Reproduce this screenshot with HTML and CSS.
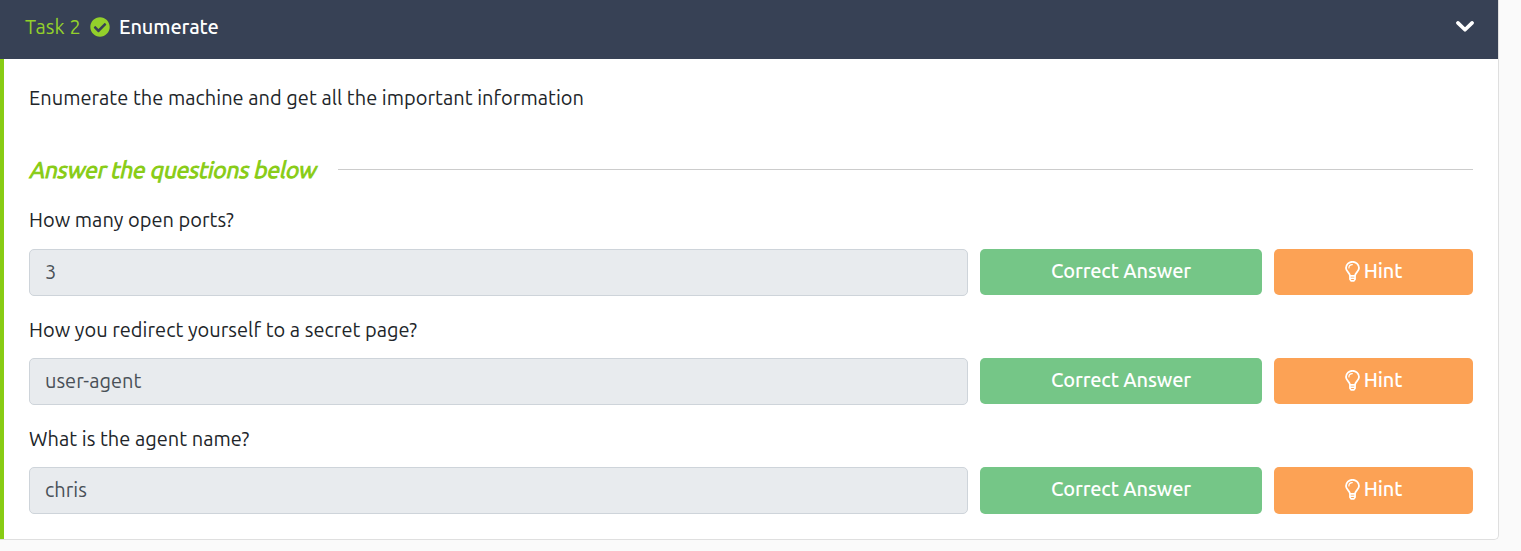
FILE: index.html
```
<!DOCTYPE html>
<html lang="en">
<head>
<meta charset="utf-8">
<title>Task 2 - Enumerate</title>
<link rel="stylesheet" href="styles.css">
</head>
<body>
<svg class="sprite" width="0" height="0">
  <symbol id="bulb" viewBox="0 0 15 21">
    <g fill="none" stroke="#fff" stroke-linecap="round" stroke-linejoin="round">
      <path stroke-width="1.8" d="M4.9 14.4C4.7 11.8 1 10.6 1 6.9a6.5 6.1 0 0 1 13 0c0 3.7-3.7 4.9-3.9 7.5"/>
      <path stroke-width="1.2" d="M3.9 6.9c0-1.9 1.5-3.2 3.4-3.3"/>
      <path stroke-width="1.6" d="M4.9 14.9h5.2M4.9 17.2h5.2M4.9 14.9v3.4l1.3 1.6h2.6l1.3-1.6v-3.4"/>
    </g>
  </symbol>
</svg>
<section class="card">
  <header class="card-header">
    <span class="task-number">Task 2</span>
    <svg class="check" viewBox="0 0 512 512"><path fill="#93d02b" d="M504 256c0 136.967-111.033 248-248 248S8 392.967 8 256 119.033 8 256 8s248 111.033 248 248zM227.314 387.314l184-184c6.248-6.248 6.248-16.379 0-22.627l-22.627-22.627c-6.248-6.249-16.379-6.249-22.628 0L216 308.118l-70.059-70.059c-6.248-6.248-16.379-6.248-22.628 0l-22.627 22.627c-6.248 6.248-6.248 16.379 0 22.627l104 104c6.249 6.249 16.379 6.249 22.628.001z"/></svg>
    <span class="task-title">Enumerate</span>
    <svg class="chevron" viewBox="0 0 18 11"><path fill="none" stroke="#fff" stroke-width="3.6" stroke-linecap="round" stroke-linejoin="round" d="M1.9 1.9L9 8.8l7.1-6.9"/></svg>
  </header>
  <div class="card-body">
    <p class="intro">Enumerate the machine and get all the important information</p>
    <div class="divider"><h2 class="heading"><span class="slant">Answer the questions below</span></h2><span class="rule"></span></div>
    <p class="question first">How many open ports?</p>
    <div class="row">
      <div class="answer">3</div>
      <div class="btn correct">Correct Answer</div>
      <div class="btn hint"><svg class="bulb"><use href="#bulb"/></svg>Hint</div>
    </div>
    <p class="question">How you redirect yourself to a secret page?</p>
    <div class="row">
      <div class="answer">user-agent</div>
      <div class="btn correct">Correct Answer</div>
      <div class="btn hint"><svg class="bulb"><use href="#bulb"/></svg>Hint</div>
    </div>
    <p class="question">What is the agent name?</p>
    <div class="row last">
      <div class="answer">chris</div>
      <div class="btn correct">Correct Answer</div>
      <div class="btn hint"><svg class="bulb"><use href="#bulb"/></svg>Hint</div>
    </div>
  </div>
</section>
</body>
</html>
```
FILE: styles.css
```
* { box-sizing: border-box; }
body {
  margin: 0;
  height: 551px;
  overflow: hidden;
  background: #fafafa;
  color: #212529;
  font: 20px/28px Ubuntu, "Noto Sans", sans-serif;
}
p, h2 { margin: 0; white-space: nowrap; }
.sprite { display: none; }
.card {
  width: 1499px;
  height: 540px;
  background: #fff;
  border: 1px solid #dfdfdf;
  border-width: 0 1px 1px 0;
  border-radius: 0 0 5px 0;
}
.card-header {
  display: flex;
  align-items: center;
  height: 59px;
  padding: 0 24px 6px 25px;
  background: #374155;
  color: #fff;
  white-space: nowrap;
}
.task-number { width: 65px; color: #93d02b; letter-spacing: 0.1px; }
.check { width: 20px; height: 20px; margin-right: 9px; }
.task-title { font-weight: 500; letter-spacing: -0.12px; }
.chevron { width: 18px; height: 11px; margin-left: auto; }
.card-body {
  height: 480px;
  padding: 25px 25px 0 25px;
  border-left: 4px solid #88cc14;
}
.intro, .question { letter-spacing: 0.025px; }
.intro { height: 69px; }
.divider { display: flex; align-items: center; height: 33px; }
.heading {
  width: 309px;
  padding-left: 1.5px;
  color: #88cc14;
  font-size: 22.7px;
  line-height: 33px;
  font-weight: 400;
  letter-spacing: -0.06px;
  -webkit-text-stroke: 1px #88cc14;
}
.slant { display: inline-block; transform: skewX(-13deg); }
.rule { flex: 1; height: 1px; background: #ccc; }
.question { margin-top: 21px; height: 42px; }
.question.first { margin-top: 20px; height: 43px; }
.row { display: grid; grid-template-columns: 939px 282px 199px; column-gap: 12px; height: 46px; }
.answer {
  height: 47px;
  padding: 0 15px;
  border: 1px solid #ced4da;
  border-radius: 5px;
  background: #e8ebee;
  color: #495057;
  line-height: 44px;
}
.btn {
  display: flex;
  align-items: center;
  justify-content: center;
  height: 46px;
  padding-bottom: 2px;
  border-radius: 5px;
  color: #fff;
  font-weight: 500;
  letter-spacing: -0.15px;
}
.last .btn { height: 47px; padding-bottom: 3px; }
.correct { background: #75c687; }
.hint { background: #fca255; }
.bulb { width: 15px; height: 21px; margin-right: 4px; }
```
